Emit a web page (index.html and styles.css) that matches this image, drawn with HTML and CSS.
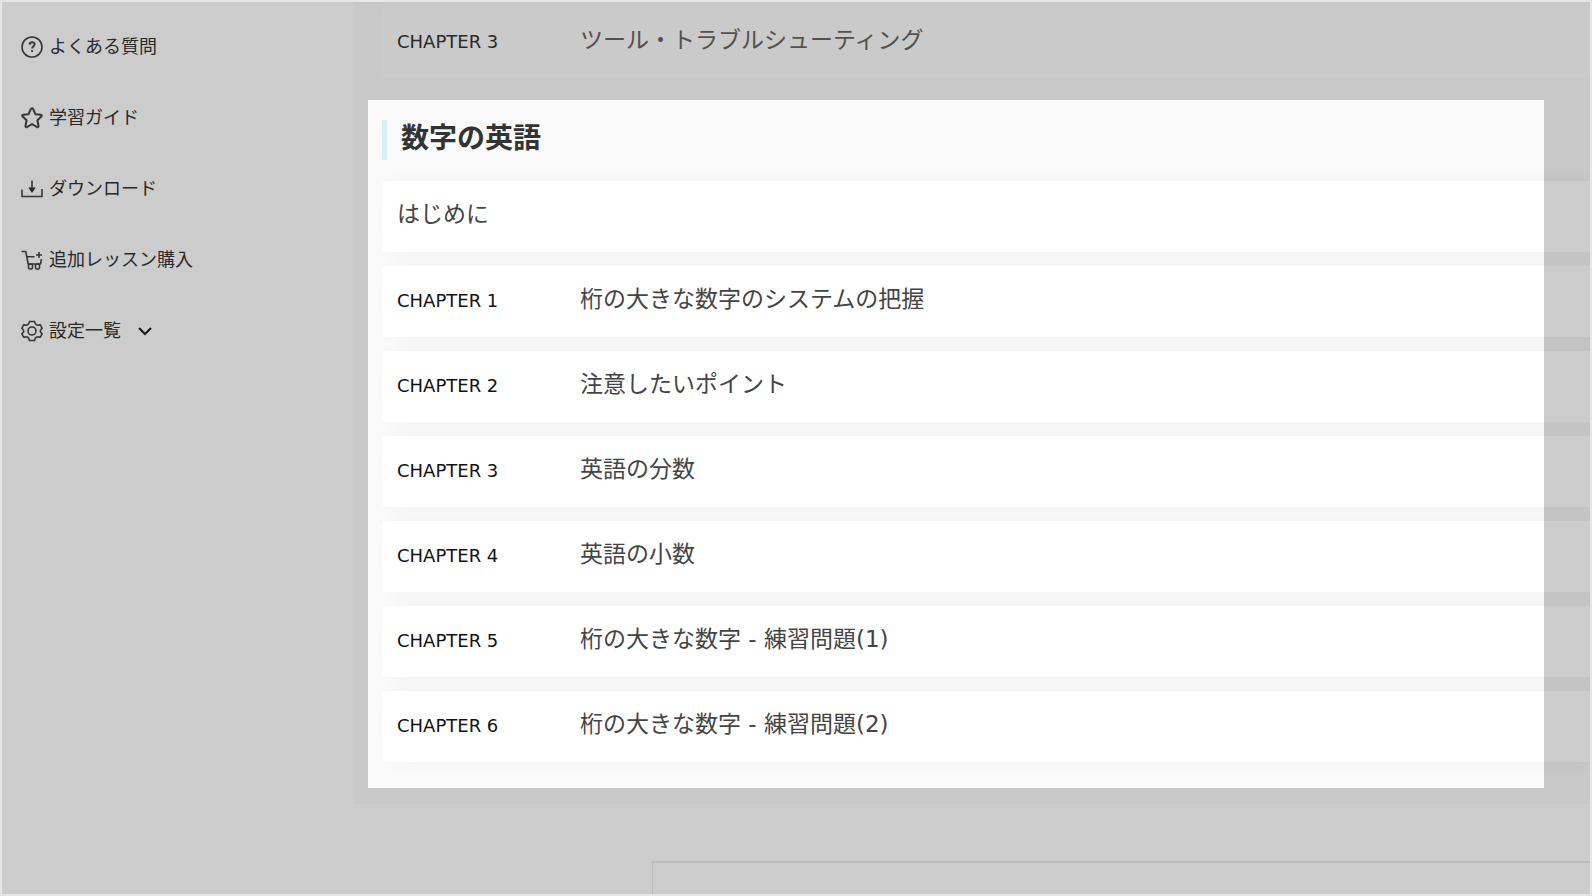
FILE: index.html
```html
<!DOCTYPE html>
<html lang="ja">
<head>
<meta charset="utf-8">
<title>数字の英語</title>
<link rel="stylesheet" href="styles.css">
</head>
<body>
<div class="page">
  <nav class="sidebar">
    <a class="nav-item" href="#faq">
      <svg class="icon" viewBox="0 0 22 22"><circle cx="11" cy="11" r="10"/><path class="bold" d="M8.700 8.600c.1-1.600 1.100-2.300 2.500-2.300s2.400.8 2.400 2.100c0 1.900-2.500 1.900-2.500 4.100M11.100 14.200v1.800"/></svg>
      <span class="nav-text">よくある質問</span>
    </a>
    <a class="nav-item" href="#guide">
      <svg class="icon star" viewBox="0 0 22 22"><path d="M11 1.300q.8 0 1.200.9l2.200 5 5.400.6q1.600.4.600 1.700l-4 3.700 1.100 5.600q0 1.800-1.600 1.200L11 17.200 6.100 20q-1.600.6-1.600-1.200l1.100-5.600-4-3.700q-1-1.300.6-1.700l5.400-.6 2.200-5q.4-.9 1.200-.9z"/></svg>
      <span class="nav-text">学習ガイド</span>
    </a>
    <a class="nav-item" href="#download">
      <svg class="icon" viewBox="0 0 22 22"><path d="M1 11.500V18.500h20v-7.500M11 2.500v11"/><path class="solid" d="M7.200 9.500h7.600L11 15z"/></svg>
      <span class="nav-text">ダウンロード</span>
    </a>
    <a class="nav-item" href="#lessons">
      <svg class="icon" viewBox="0 0 22 22"><path d="M.5 2.500h4.200l2.500 12.500h12.300l1-5M6 7.700h7.500M18 3v6M15 6h6"/><rect x="7.500" y="15" width="4" height="5" rx="1.500"/><rect x="14.500" y="15" width="4" height="5" rx="1.500"/></svg>
      <span class="nav-text">追加レッスン購入</span>
    </a>
    <button class="nav-item" type="button" aria-expanded="false">
      <svg class="icon" viewBox="0 0 22 22"><circle cx="11" cy="11" r="4"/><path d="M8.500 1.500h5q.6 2.800 2.200 3.400 1.200.6 3.500-.2l2 3.600q-2 1.500-2 2.700t2 2.700l-2 3.600q-2.300-.8-3.500-.2-1.600.6-2.200 3.400h-5q-.6-2.800-2.200-3.400-1.200-.6-3.500.2l-2-3.600q2-1.500 2-2.700t-2-2.700l2-3.600q2.300.8 3.500.2 1.600-.6 2.200-3.400z"/></svg>
      <span class="nav-text">設定一覧</span>
      <svg class="chevron" viewBox="0 0 16 10"><path d="M2 2l6 6 6-6"/></svg>
    </button>
  </nav>

  <div class="content">
    <main class="lessons">
      <ul class="chapters chapters-flat">
        <li><a class="chapter" href="#tools"><span class="label">CHAPTER 3</span><span class="name">ツール・トラブルシューティング</span></a></li>
      </ul>
      <section class="unit">
        <h2 class="unit-title"><span class="unit-name">数字の英語</span></h2>
        <ul class="chapters">
          <li><a class="chapter" href="#intro"><span class="name">はじめに</span></a></li>
          <li><a class="chapter" href="#c1"><span class="label">CHAPTER 1</span><span class="name">桁の大きな数字のシステムの把握</span></a></li>
          <li><a class="chapter" href="#c2"><span class="label">CHAPTER 2</span><span class="name">注意したいポイント</span></a></li>
          <li><a class="chapter" href="#c3"><span class="label">CHAPTER 3</span><span class="name">英語の分数</span></a></li>
          <li><a class="chapter" href="#c4"><span class="label">CHAPTER 4</span><span class="name">英語の小数</span></a></li>
          <li><a class="chapter" href="#c5"><span class="label">CHAPTER 5</span><span class="name">桁の大きな数字 - 練習問題(1)</span></a></li>
          <li><a class="chapter" href="#c6"><span class="label">CHAPTER 6</span><span class="name">桁の大きな数字 - 練習問題(2)</span></a></li>
        </ul>
        <div class="spotlight"></div>
      </section>
    </main>
    <div class="panel"></div>
  </div>
</div>
</body>
</html>
```
FILE: styles.css
```css
* {
  box-sizing: border-box;
}

body {
  margin: 0;
  font-family: "DejaVu Sans", "Noto Sans CJK JP", sans-serif;
  color: #333;
  background: #fff;
}

.page {
  display: flex;
  height: 100vh;
  border: 2px solid #e6e6e6;
  overflow: hidden;
}

/* Side navigation */
.sidebar {
  display: flex;
  flex-direction: column;
  flex: 0 0 352px;
  gap: 43px;
  padding: 31px 19px;
}

.nav-item {
  display: flex;
  align-items: center;
  gap: 6px;
  height: 28px;
  padding: 0;
  border: 0;
  background: none;
  color: #333;
  font: inherit;
  font-size: 18px;
  line-height: 28px;
  text-decoration: none;
  cursor: pointer;
}

.nav-text {
  padding-bottom: 4px;
  font-family: "Noto Sans CJK JP", sans-serif;
}

.icon {
  width: 22px;
  height: 22px;
  fill: none;
  stroke: #444;
  stroke-width: 1.6;
  stroke-linejoin: round;
}

.icon.star {
  stroke-width: 2;
}

.icon .bold {
  stroke-width: 2;
}

.icon .solid {
  fill: #333;
  stroke: none;
}

.chevron {
  width: 16px;
  height: 10px;
  margin-left: 10px;
  fill: none;
  stroke: #222;
  stroke-width: 2.2;
}

/* Lesson list */
.content {
  display: flex;
  flex: 1;
  flex-direction: column;
  min-width: 0;
}

.lessons {
  padding: 5px 0 16px 14px;
  background: #fafafa;
}

.chapters {
  display: grid;
  gap: 14px;
  margin: 0;
  padding: 0;
  list-style: none;
}

.chapters li {
  border-radius: 4px 0 0 4px;
  box-shadow: 10px 0 20px rgba(0, 0, 0, 0.04);
}

.chapters-flat {
  margin: 0 0 22px 14px;
}

.chapters-flat li {
  box-shadow: none;
}

.chapter {
  position: relative;
  display: flex;
  align-items: center;
  height: 71px;
  padding: 0 15px;
  border-radius: 4px 0 0 4px;
  background: #fff;
  color: #444;
  text-decoration: none;
}

.chapters-flat .chapter {
  background: #fdfdfd;
  color: #666;
}

.label {
  flex: 0 0 183px;
  padding-bottom: 2px;
  color: #111;
  font-size: 18px;
  line-height: 28px;
}

.chapters-flat .label {
  color: #333;
}

.name {
  padding-bottom: 6px;
  font-size: 23px;
  line-height: 34px;
}

.unit {
  position: relative;
  padding: 20px 0 26px 14px;
}

.unit-title {
  margin: 0 0 21px;
  padding-left: 14px;
  border-left: 5px solid #daeef3;
  font-size: 28px;
  line-height: 40px;
}

.unit-name {
  display: block;
  height: 40px;
  line-height: 38px;
}

/* Dims everything around the highlighted unit */
.spotlight {
  position: absolute;
  inset: 0 46px 0 0;
  z-index: 10;
  box-shadow: 0 0 0 4000px rgba(0, 0, 0, 0.2);
  pointer-events: none;
}

.panel {
  flex: 1;
  margin: 57px 0 0 298px;
  border: solid #eaeaea;
  border-width: 2px 0 0 1px;
}
```
